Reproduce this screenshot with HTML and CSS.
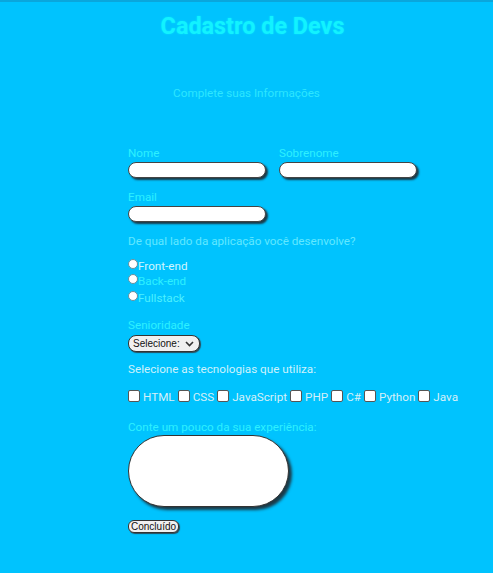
FILE: index.html
```html
<!DOCTYPE html>
<html lang="pt-BR">
<head>
<meta charset="utf-8">
<title>Cadastro de Devs</title>
<link rel="stylesheet" href="styles.css">
</head>
<body>
<div class="page">
  <h1 class="title">Cadastro de Devs</h1>
  <p class="subtitle">Complete suas Informações</p>
  <form class="form">
    <div class="row">
      <div class="field">
        <label class="lbl cyan">Nome</label>
        <input class="txt" type="text">
      </div>
      <div class="field">
        <label class="lbl cyan">Sobrenome</label>
        <input class="txt" type="text">
      </div>
    </div>
    <div class="field email">
      <label class="lbl cyan">Email</label>
      <input class="txt" type="text">
    </div>
    <p class="q pale">De qual lado da aplicação você desenvolve?</p>
    <div class="radios">
      <label class="radio white"><span class="dot"></span>Front-end</label>
      <label class="radio cyan"><span class="dot"></span>Back-end</label>
      <label class="radio cyan2"><span class="dot"></span>Fullstack</label>
    </div>
    <label class="lbl cyan sen">Senioridade</label>
    <div class="select">Selecione: <svg width="9" height="6" viewBox="0 0 9 6"><path d="M1 1l3.5 3.5L8 1" fill="none" stroke="#333" stroke-width="1.6"/></svg></div>
    <p class="q pale2 tech">Selecione as tecnologias que utiliza:</p>
    <div class="checks">
      <span class="cb"></span><span class="ck">HTML</span>
      <span class="cb"></span><span class="ck">CSS</span>
      <span class="cb"></span><span class="ck">JavaScript</span>
      <span class="cb"></span><span class="ck">PHP</span>
      <span class="cb"></span><span class="ck">C#</span>
      <span class="cb"></span><span class="ck">Python</span>
      <span class="cb"></span><span class="ck">Java</span>
    </div>
    <p class="q cyan exp">Conte um pouco da sua experiência:</p>
    <div class="area"></div>
    <div class="btn">Concluído</div>
  </form>
</div>
</body>
</html>
```
FILE: styles.css
```css
html, body {
  margin: 0;
  padding: 0;
}
body {
  background: #00c3fe;
  border-top: 2px solid #0aa6dc;
  height: 571px;
  font-family: Roboto, "Liberation Sans", sans-serif;
}
.page {
  width: 493px;
}
.title {
  margin: 0;
  padding-top: 10px;
  text-align: center;
  padding-left: 12px;
  font-size: 23.4px;
  line-height: 28px;
  font-weight: 700;
  color: #12f2ff;
  text-shadow: 0 0 2px rgba(0, 255, 255, 0.6);
}
.subtitle {
  margin: 0;
  margin-top: 46px;
  text-align: center;
  font-size: 11.7px;
  line-height: 14px;
  color: #2ee6ff;
}
.form {
  margin-left: 128px;
  margin-top: 46px;
  width: 300px;
}
.row {
  display: flex;
  gap: 13px;
}
.field {
  display: flex;
  flex-direction: column;
}
.lbl {
  font-size: 11.7px;
  line-height: 14px;
  display: block;
}
.field .lbl {
  margin-bottom: 2px;
}
.cyan { color: #2ef0ff; }
.cyan2 { color: #4cf0ff; }
.white { color: #d0f6ff; }
.pale { color: #62e8ff; }
.pale2 { color: #cdf2fc; }
.txt {
  box-sizing: border-box;
  width: 138px;
  height: 16px;
  margin: 0;
  padding: 0;
  border: 1px solid #444;
  border-radius: 8px;
  background: #fff;
  box-shadow: 2px 2px 2px #1c3a48;
  outline: none;
}
.email {
  margin-top: 12px;
}
.q {
  margin: 0;
  font-size: 11.7px;
  line-height: 14px;
}
.email + .q {
  margin-top: 12px;
}
.radios {
  margin-top: 10px;
  display: flex;
  flex-direction: column;
}
.radio {
  display: flex;
  align-items: center;
  font-size: 11.7px;
  height: 15px;
}
.radio:nth-child(3) { margin-top: 2px; }
.dot {
  width: 10px;
  height: 10px;
  border-radius: 50%;
  background: #fff;
  border: 1px solid #6a8f9c;
  box-sizing: border-box;
  margin-top: -3px;
}
.sen {
  margin-top: 13px;
}
.select {
  margin-top: 3px;
  box-sizing: border-box;
  width: 72px;
  height: 17px;
  border: 1px solid #333;
  border-radius: 8px;
  background: #f0f0f0;
  box-shadow: 1px 1px 1px #2a4a58;
  font-family: "Liberation Sans", Arial, sans-serif;
  font-size: 10px;
  color: #111;
  display: flex;
  align-items: center;
  justify-content: space-between;
  padding: 0 5px 0 4px;
}
.tech {
  margin-top: 10px;
}
.checks {
  margin-top: 14px;
  display: flex;
  align-items: center;
  white-space: nowrap;
  width: 340px;
}
.cb {
  width: 12px;
  height: 12px;
  background: #fff;
  border: 1px solid #555;
  border-radius: 2px;
  box-sizing: border-box;
  margin-right: 3px;
  margin-top: -2px;
}
.ck {
  font-size: 11.7px;
  color: #d6f0f8;
  margin-right: 3px;
}
.exp {
  margin-top: 16px;
}
.area {
  margin-top: 1px;
  width: 161px;
  height: 72px;
  box-sizing: border-box;
  border: 1px solid #333;
  border-radius: 36px;
  background: #fff;
  box-shadow: 3px 3px 3px #1c3a48;
}
.btn {
  margin-top: 13px;
  display: inline-block;
  box-sizing: border-box;
  height: 13px;
  padding: 0 2px;
  border: 1px solid #333;
  border-radius: 6px;
  background: #f0f0f0;
  box-shadow: 1px 1px 1px #2a4a58;
  font-family: "Liberation Sans", Arial, sans-serif;
  font-size: 10px;
  line-height: 11px;
  color: #111;
}
```
